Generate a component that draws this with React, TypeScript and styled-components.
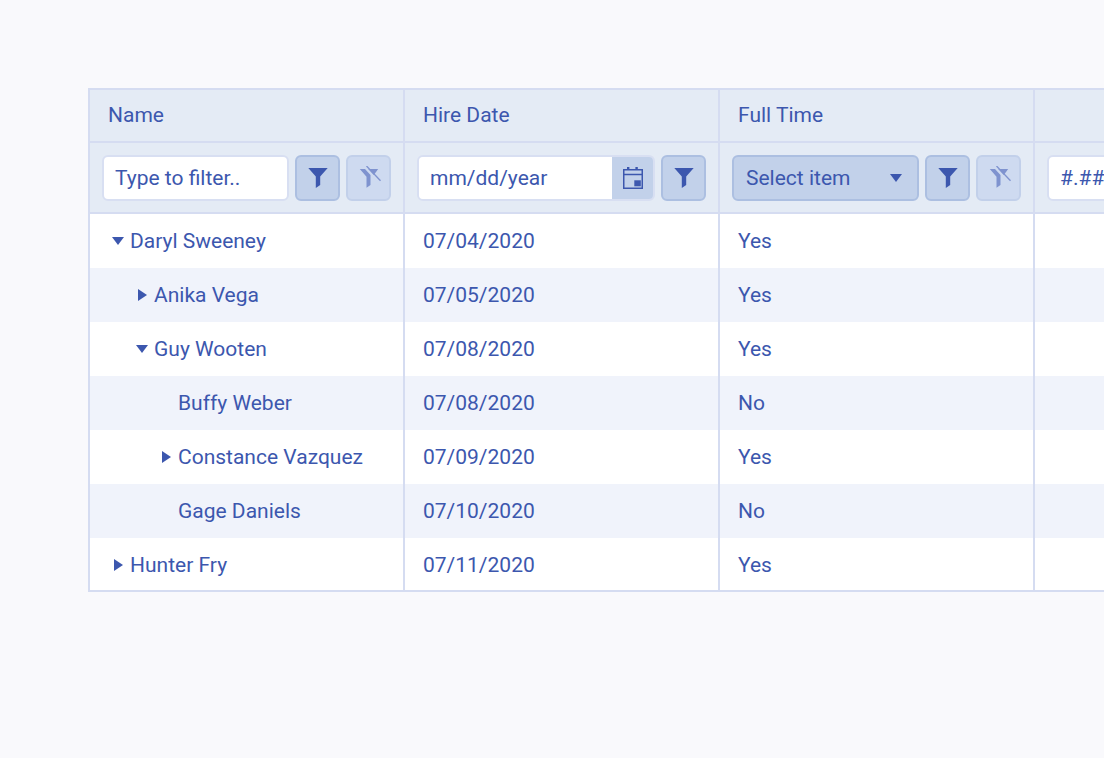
import styled, { createGlobalStyle } from "styled-components";

const Global = createGlobalStyle`
    html, body {
        margin: 0;
        height: 100%;
        overflow: hidden;
        background: #f9f9fc;
    }
`;

const Page = styled.div`
    padding: 88px 0 0 88px;
    width: 1400px;
    font-family: Roboto, "Liberation Sans", sans-serif;
    font-size: 21px;
    color: #3c57ae;
`;

const Table = styled.table`
    table-layout: fixed;
    width: 1262px;
    border-collapse: separate;
    border-spacing: 0;
    border-top: 2px solid #d5dcf1;
    border-left: 2px solid #d5dcf1;
`;

const Column = styled.col`
    width: 315px;
`;

const HeadCell = styled.th`
    height: 53px;
    box-sizing: border-box;
    padding: 0 18px 2px;
    background: #e4ebf5;
    border-right: 2px solid #d5dcf1;
    border-bottom: 2px solid #d5dcf1;
    font-weight: 400;
    text-align: left;
`;

const FilterCell = styled.td`
    height: 71px;
    box-sizing: border-box;
    padding: 0 12px;
    background: #e4ebf5;
    border-right: 2px solid #d5dcf1;
    border-bottom: 2px solid #d5dcf1;
`;

const BodyRow = styled.tr<{ $striped: boolean }>`
    background: ${(p) => (p.$striped ? "#f0f3fb" : "#ffffff")};
`;

const BodyCell = styled.td<{ $last: boolean }>`
    height: 54px;
    box-sizing: border-box;
    padding: ${(p) => (p.$last ? "2px" : "0")} 18px 0;
    border-right: 2px solid #d5dcf1;
    border-bottom: ${(p) => (p.$last ? "2px solid #d5dcf1" : "none")};
`;

const TreeLabel = styled.div<{ $level: number }>`
    display: flex;
    align-items: center;
    padding-left: ${(p) => p.$level * 24 + 3}px;
`;

const Toggle = styled.span`
    flex: none;
    display: flex;
    align-items: center;
    justify-content: center;
    width: 14px;
    height: 14px;
    margin-right: 5px;
`;

const FilterBar = styled.div`
    display: flex;
    align-items: center;
    gap: 6px;
`;

const TextField = styled.div`
    flex: 1;
    min-width: 0;
    height: 46px;
    box-sizing: border-box;
    display: flex;
    align-items: center;
    padding: 0 11px;
    background: #ffffff;
    border: 2px solid #d8dff2;
    border-radius: 6px;
    white-space: nowrap;
`;

const DateField = styled.div`
    flex: 1;
    height: 46px;
    box-sizing: border-box;
    display: flex;
    border: 2px solid #d8dff2;
    border-radius: 6px;
    overflow: hidden;
`;

const DateValue = styled.div`
    flex: 1;
    display: flex;
    align-items: center;
    padding: 0 11px;
    background: #ffffff;
`;

const DateButton = styled.div`
    flex: none;
    width: 41px;
    display: flex;
    align-items: center;
    justify-content: center;
    background: #c2d1ea;
`;

const SelectBox = styled.div`
    flex: 1;
    height: 46px;
    box-sizing: border-box;
    display: flex;
    align-items: center;
    justify-content: space-between;
    padding: 0 15px 0 12px;
    background: #c2d1ea;
    border: 2px solid #acbfe1;
    border-radius: 6px;
`;

const IconButton = styled.button<{ $faded?: boolean }>`
    flex: none;
    width: 45px;
    height: 46px;
    padding: 0;
    display: flex;
    align-items: center;
    justify-content: center;
    background: ${(p) => (p.$faded ? "#cedaf0" : "#c2d1ea")};
    border: 2px solid ${(p) => (p.$faded ? "#c2d0ea" : "#acbfe1")};
    border-radius: 6px;
`;

const CaretDown = () => (
    <svg width="12" height="8" viewBox="0 0 12 8">
        <polygon points="0,0 12,0 6,8" fill="#3c57ae" />
    </svg>
);

const CaretRight = () => (
    <svg width="9" height="12" viewBox="0 0 9 12">
        <polygon points="0,0 9,6 0,12" fill="#3c57ae" />
    </svg>
);

const FunnelIcon = () => (
    <svg width="20" height="20" viewBox="0 0 20 20">
        <polygon points="0.3,0 19.7,0 12.2,8.5 12.2,17 7.8,20 7.8,8.5" fill="#3c57ae" />
    </svg>
);

const ClearFilterIcon = () => (
    <svg width="24" height="24" viewBox="0 0 24 24">
        <polygon points="2.8,3 8,3 13.5,9 13.5,19 9.5,21.7 9.5,10.7" fill="#7f93cf" />
        <polygon points="11.2,3 21.2,3 16.8,9" fill="#7f93cf" />
        <line x1="9.5" y1="0" x2="23.5" y2="14.7" stroke="#7f93cf" strokeWidth="1.3" />
    </svg>
);

const CalendarIcon = () => (
    <svg width="20" height="22" viewBox="0 0 20 22" fill="none">
        <rect x="0.75" y="2.75" width="18.5" height="18.5" stroke="#3c57ae" strokeWidth="1.5" />
        <line x1="1" y1="7.5" x2="19" y2="7.5" stroke="#3c57ae" strokeWidth="1.5" />
        <rect x="4" y="0" width="2.4" height="3" fill="#3c57ae" />
        <rect x="12.4" y="0" width="2.4" height="3" fill="#3c57ae" />
        <rect x="11.3" y="13.3" width="6.5" height="6" fill="#3c57ae" />
    </svg>
);

type Row = {
    name: string;
    level: number;
    toggle?: "open" | "closed";
    date: string;
    fullTime: string;
};

const rows: Row[] = [
    { name: "Daryl Sweeney", level: 0, toggle: "open", date: "07/04/2020", fullTime: "Yes" },
    { name: "Anika Vega", level: 1, toggle: "closed", date: "07/05/2020", fullTime: "Yes" },
    { name: "Guy Wooten", level: 1, toggle: "open", date: "07/08/2020", fullTime: "Yes" },
    { name: "Buffy Weber", level: 2, date: "07/08/2020", fullTime: "No" },
    { name: "Constance Vazquez", level: 2, toggle: "closed", date: "07/09/2020", fullTime: "Yes" },
    { name: "Gage Daniels", level: 2, date: "07/10/2020", fullTime: "No" },
    { name: "Hunter Fry", level: 0, toggle: "closed", date: "07/11/2020", fullTime: "Yes" },
];

export default function App() {
    return (
        <Page>
            <Global />
            <Table>
                <colgroup>
                    <Column />
                    <Column />
                    <Column />
                    <Column />
                </colgroup>
                <thead>
                    <tr>
                        <HeadCell>Name</HeadCell>
                        <HeadCell>Hire Date</HeadCell>
                        <HeadCell>Full Time</HeadCell>
                        <HeadCell />
                    </tr>
                    <tr>
                        <FilterCell>
                            <FilterBar>
                                <TextField>Type to filter..</TextField>
                                <IconButton><FunnelIcon /></IconButton>
                                <IconButton $faded><ClearFilterIcon /></IconButton>
                            </FilterBar>
                        </FilterCell>
                        <FilterCell>
                            <FilterBar>
                                <DateField>
                                    <DateValue>mm/dd/year</DateValue>
                                    <DateButton><CalendarIcon /></DateButton>
                                </DateField>
                                <IconButton><FunnelIcon /></IconButton>
                            </FilterBar>
                        </FilterCell>
                        <FilterCell>
                            <FilterBar>
                                <SelectBox>
                                    Select item
                                    <CaretDown />
                                </SelectBox>
                                <IconButton><FunnelIcon /></IconButton>
                                <IconButton $faded><ClearFilterIcon /></IconButton>
                            </FilterBar>
                        </FilterCell>
                        <FilterCell>
                            <FilterBar>
                                <TextField>#.###</TextField>
                                <IconButton><FunnelIcon /></IconButton>
                                <IconButton $faded><ClearFilterIcon /></IconButton>
                            </FilterBar>
                        </FilterCell>
                    </tr>
                </thead>
                <tbody>
                    {rows.map((row, i) => {
                        const last = i === rows.length - 1;
                        return (
                            <BodyRow key={row.name} $striped={i % 2 === 1}>
                                <BodyCell $last={last}>
                                    <TreeLabel $level={row.level}>
                                        <Toggle>
                                            {row.toggle === "open" && <CaretDown />}
                                            {row.toggle === "closed" && <CaretRight />}
                                        </Toggle>
                                        {row.name}
                                    </TreeLabel>
                                </BodyCell>
                                <BodyCell $last={last}>{row.date}</BodyCell>
                                <BodyCell $last={last}>{row.fullTime}</BodyCell>
                                <BodyCell $last={last} />
                            </BodyRow>
                        );
                    })}
                </tbody>
            </Table>
        </Page>
    );
}
